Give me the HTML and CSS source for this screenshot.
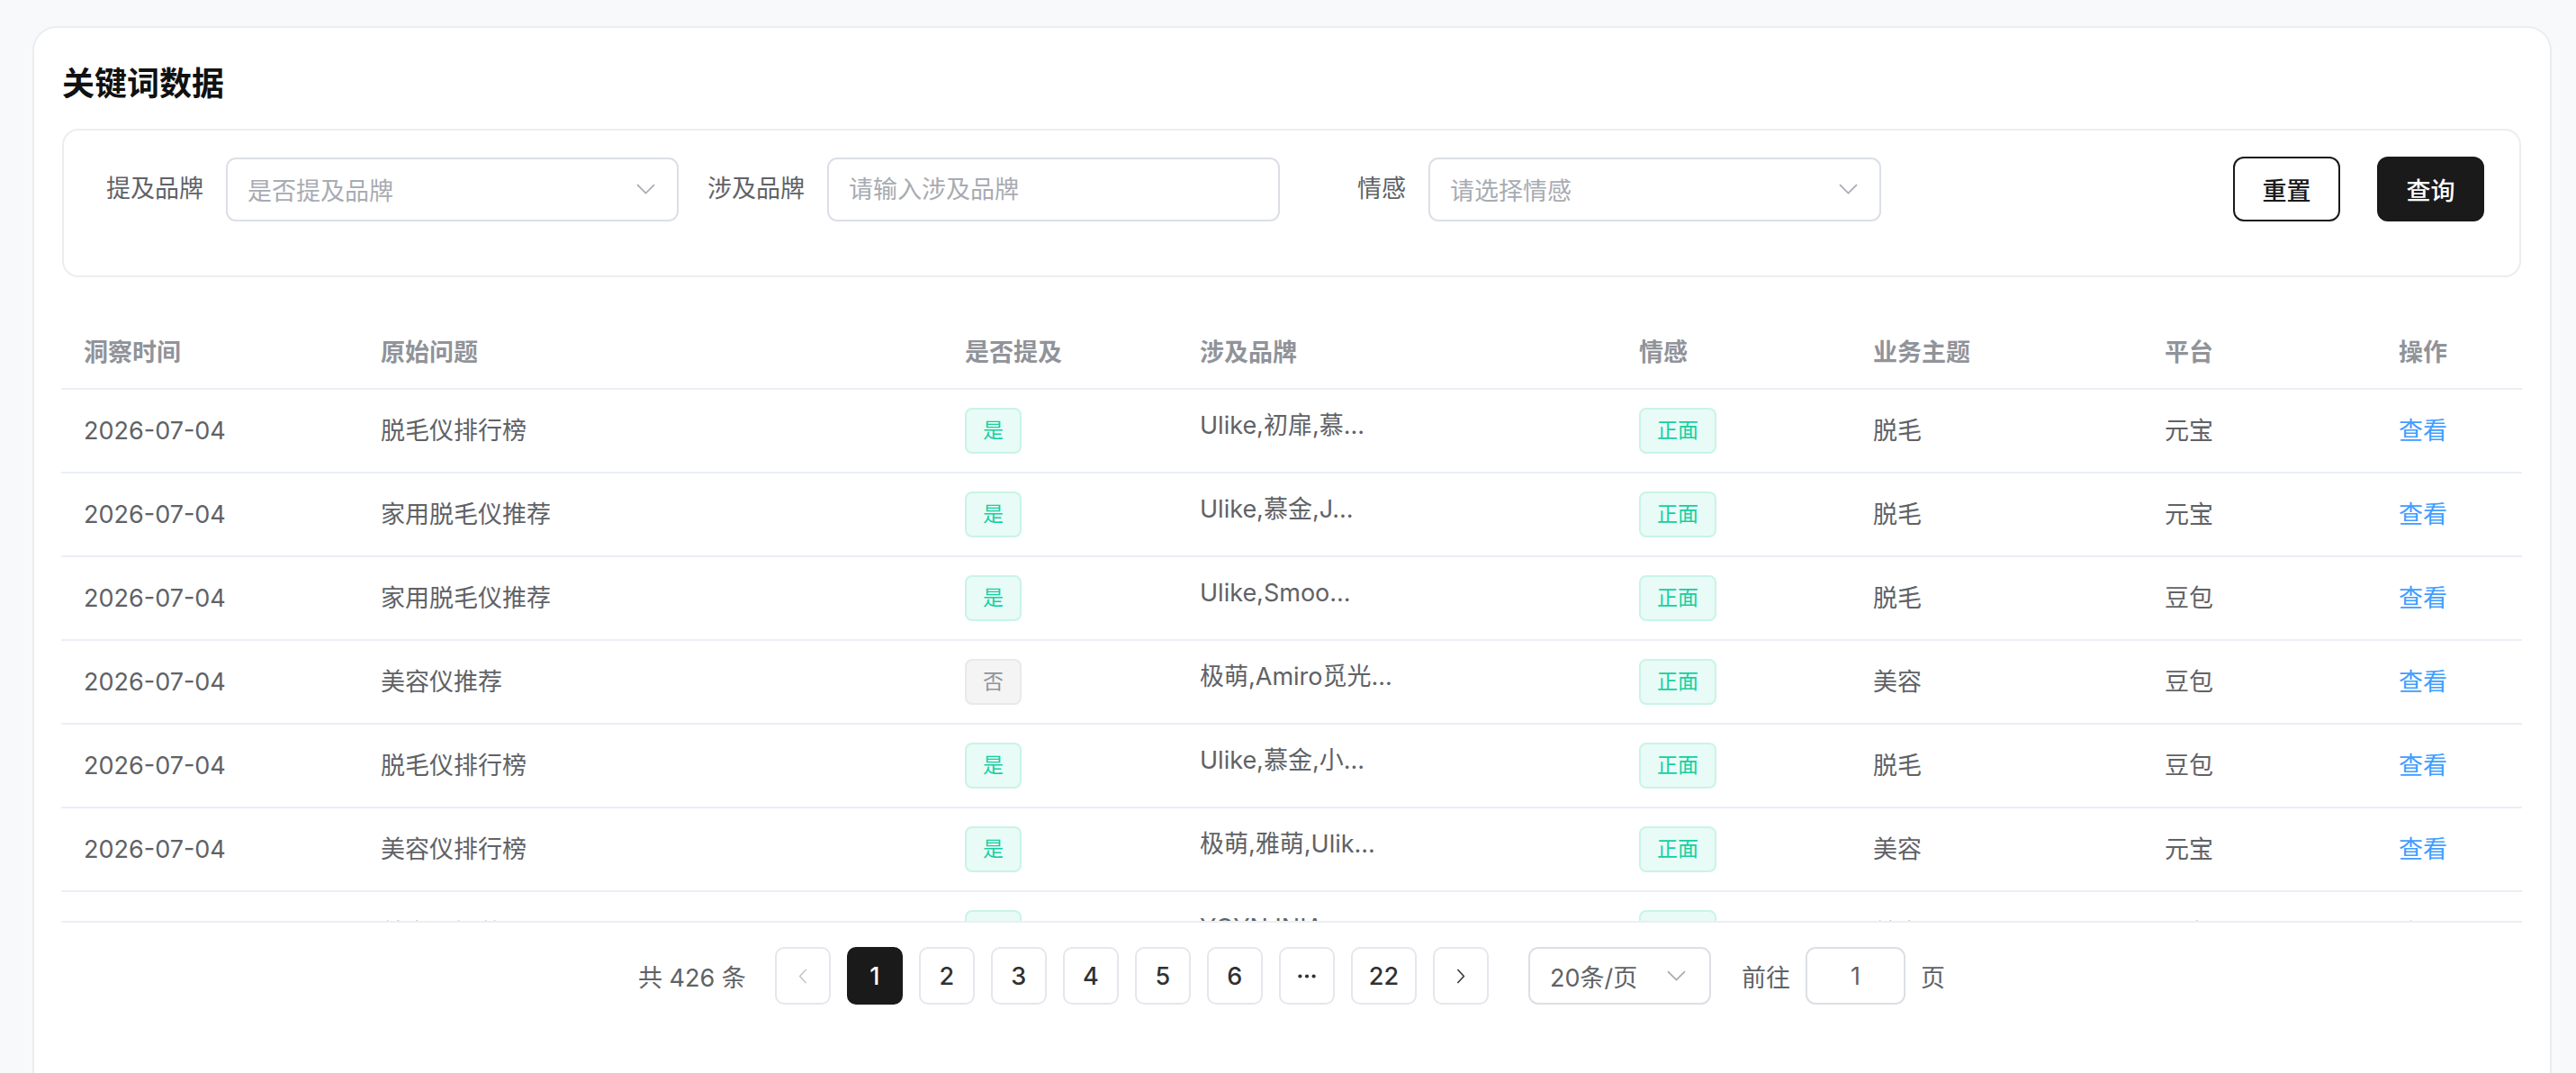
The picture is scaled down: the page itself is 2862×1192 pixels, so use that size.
FILE: index.html
```html
<!DOCTYPE html>
<html lang="zh-CN">
<head>
<meta charset="utf-8">
<title>关键词数据</title>
<link rel="stylesheet" href="styles.css">
</head>
<body>
<div class="page">
  <section class="card">
    <h1 class="title">关键词数据</h1>

    <form class="filter">
      <div class="field">
        <label class="field-label">提及品牌</label>
        <div class="control select">
          <span class="placeholder">是否提及品牌</span>
          <svg class="chev-down" width="21" height="12" viewBox="0 0 21 12"><path d="M1 1.2 L10.5 10.6 L20 1.2" fill="none" stroke="#a8abb2" stroke-width="1.7"/></svg>
        </div>
      </div>
      <div class="field">
        <label class="field-label">涉及品牌</label>
        <input class="control text-input" type="text" placeholder="请输入涉及品牌">
      </div>
      <div class="field">
        <label class="field-label">情感</label>
        <div class="control select">
          <span class="placeholder">请选择情感</span>
          <svg class="chev-down" width="21" height="12" viewBox="0 0 21 12"><path d="M1 1.2 L10.5 10.6 L20 1.2" fill="none" stroke="#a8abb2" stroke-width="1.7"/></svg>
        </div>
      </div>
      <div class="actions">
        <button type="button" class="btn">重置</button>
        <button type="button" class="btn btn-primary">查询</button>
      </div>
    </form>

    <div class="table">
      <div class="row head">
        <div class="cell">洞察时间</div>
        <div class="cell">原始问题</div>
        <div class="cell">是否提及</div>
        <div class="cell">涉及品牌</div>
        <div class="cell">情感</div>
        <div class="cell">业务主题</div>
        <div class="cell">平台</div>
        <div class="cell">操作</div>
      </div>
      <div class="body">
        <div class="row">
          <div class="cell">2026-07-04</div>
          <div class="cell">脱毛仪排行榜</div>
          <div class="cell"><span class="tag tag-yes">是</span></div>
          <div class="cell brand">Ulike,初扉,慕...</div>
          <div class="cell"><span class="tag tag-yes">正面</span></div>
          <div class="cell">脱毛</div>
          <div class="cell">元宝</div>
          <div class="cell"><a class="link" href="#">查看</a></div>
        </div>
        <div class="row">
          <div class="cell">2026-07-04</div>
          <div class="cell">家用脱毛仪推荐</div>
          <div class="cell"><span class="tag tag-yes">是</span></div>
          <div class="cell brand">Ulike,慕金,J...</div>
          <div class="cell"><span class="tag tag-yes">正面</span></div>
          <div class="cell">脱毛</div>
          <div class="cell">元宝</div>
          <div class="cell"><a class="link" href="#">查看</a></div>
        </div>
        <div class="row">
          <div class="cell">2026-07-04</div>
          <div class="cell">家用脱毛仪推荐</div>
          <div class="cell"><span class="tag tag-yes">是</span></div>
          <div class="cell brand">Ulike,Smoo...</div>
          <div class="cell"><span class="tag tag-yes">正面</span></div>
          <div class="cell">脱毛</div>
          <div class="cell">豆包</div>
          <div class="cell"><a class="link" href="#">查看</a></div>
        </div>
        <div class="row">
          <div class="cell">2026-07-04</div>
          <div class="cell">美容仪推荐</div>
          <div class="cell"><span class="tag tag-no">否</span></div>
          <div class="cell brand">极萌,Amiro觅光...</div>
          <div class="cell"><span class="tag tag-yes">正面</span></div>
          <div class="cell">美容</div>
          <div class="cell">豆包</div>
          <div class="cell"><a class="link" href="#">查看</a></div>
        </div>
        <div class="row">
          <div class="cell">2026-07-04</div>
          <div class="cell">脱毛仪排行榜</div>
          <div class="cell"><span class="tag tag-yes">是</span></div>
          <div class="cell brand">Ulike,慕金,小...</div>
          <div class="cell"><span class="tag tag-yes">正面</span></div>
          <div class="cell">脱毛</div>
          <div class="cell">豆包</div>
          <div class="cell"><a class="link" href="#">查看</a></div>
        </div>
        <div class="row">
          <div class="cell">2026-07-04</div>
          <div class="cell">美容仪排行榜</div>
          <div class="cell"><span class="tag tag-yes">是</span></div>
          <div class="cell brand">极萌,雅萌,Ulik...</div>
          <div class="cell"><span class="tag tag-yes">正面</span></div>
          <div class="cell">美容</div>
          <div class="cell">元宝</div>
          <div class="cell"><a class="link" href="#">查看</a></div>
        </div>
        <div class="row">
          <div class="cell">2026-07-04</div>
          <div class="cell">美容仪推荐</div>
          <div class="cell"><span class="tag tag-yes">是</span></div>
          <div class="cell brand">YOYN,INIA...</div>
          <div class="cell"><span class="tag tag-yes">正面</span></div>
          <div class="cell">美容</div>
          <div class="cell">豆包</div>
          <div class="cell"><a class="link" href="#">查看</a></div>
        </div>
      </div>
    </div>

    <nav class="pager">
      <span class="total">共 426 条</span>
      <button type="button" class="pg pg-nav" aria-label="上一页">
        <svg width="10" height="17" viewBox="0 0 10 17"><path d="M8.6 1 L1.6 8.5 L8.6 16" fill="none" stroke="#c0c4cc" stroke-width="1.5"/></svg>
      </button>
      <button type="button" class="pg pg-active">1</button>
      <button type="button" class="pg">2</button>
      <button type="button" class="pg">3</button>
      <button type="button" class="pg">4</button>
      <button type="button" class="pg">5</button>
      <button type="button" class="pg">6</button>
      <button type="button" class="pg pg-more" aria-label="更多">
        <svg width="20" height="5" viewBox="0 0 20 5"><circle cx="2.4" cy="2.5" r="2.1" fill="#303133"/><circle cx="10" cy="2.5" r="2.1" fill="#303133"/><circle cx="17.6" cy="2.5" r="2.1" fill="#303133"/></svg>
      </button>
      <button type="button" class="pg">22</button>
      <button type="button" class="pg pg-nav pg-last" aria-label="下一页">
        <svg width="10" height="17" viewBox="0 0 10 17"><path d="M1.4 1 L8.4 8.5 L1.4 16" fill="none" stroke="#303133" stroke-width="1.5"/></svg>
      </button>
      <div class="size-select">
        <span>20条/页</span>
        <svg width="21" height="12" viewBox="0 0 21 12"><path d="M1 1.2 L10.5 10.6 L20 1.2" fill="none" stroke="#a8abb2" stroke-width="1.7"/></svg>
      </div>
      <span class="jump-label">前往</span>
      <input class="jump-input" type="text" value="1">
      <span class="jump-unit">页</span>
    </nav>
  </section>
</div>
</body>
</html>
```

FILE: styles.css
```css
* {
  box-sizing: border-box;
}

html,
body {
  margin: 0;
  height: 100%;
}

body {
  background: #f8f9fb;
  font-family: Inter, "Noto Sans CJK SC", sans-serif;
  color: #606266;
  overflow: hidden;
}

.page {
  padding: 29px 27px 0 36px;
}

.card {
  background: #ffffff;
  border: 2px solid #ebedf0;
  border-radius: 27px;
  padding: 34px 32px 200px 31px;
  min-height: 1300px;
}

.title {
  margin: 0;
  font-family: "Noto Sans CJK SC", sans-serif;
  font-size: 36px;
  line-height: 50px;
  font-weight: 700;
  color: #111111;
}

/* filter bar */
.filter {
  margin: 28px 0 0;
  border: 2px solid #ebedf0;
  border-radius: 18px;
  padding: 29px 39px 60px 44px;
  display: flex;
  align-items: center;
}

.field {
  display: flex;
  align-items: center;
  margin-right: 29px;
}

.field-label {
  width: 136px;
  padding-right: 25px;
  text-align: right;
  font-size: 27px;
  line-height: 40px;
  color: #606266;
  white-space: nowrap;
}

.control {
  width: 503px;
  height: 71px;
  border: 2px solid #dcdfe6;
  border-radius: 11px;
  padding: 0 22px;
  background: #ffffff;
  font-family: Inter, "Noto Sans CJK SC", sans-serif;
  font-size: 27px;
  color: #606266;
}

.select {
  display: flex;
  align-items: center;
  justify-content: space-between;
}

.placeholder {
  color: #a8abb2;
}

.text-input {
  outline: none;
}

.text-input::placeholder {
  color: #a8abb2;
}

.chev-down {
  display: block;
  margin-right: 2px;
}

.actions {
  margin-left: auto;
  display: flex;
  gap: 41px;
}

.btn {
  width: 119px;
  height: 72px;
  border: 2px solid #1a1a1a;
  border-radius: 12px;
  background: #ffffff;
  color: #1a1a1a;
  font-family: "Noto Sans CJK SC", sans-serif;
  font-size: 27px;
  font-weight: 500;
  padding: 0;
}

.btn-primary {
  background: #1a1a1a;
  color: #ffffff;
}

/* table */
.table {
  margin: 45px -1px 0;
}

.row {
  display: grid;
  grid-template-columns: 330px 649px 261px 488px 260px 324px 260px 1fr;
  align-items: center;
  height: 93px;
  border-bottom: 2px solid #ebeef5;
}

.head {
  height: 80px;
  color: #909399;
  font-weight: 600;
}

.cell {
  padding-left: 25px;
  font-size: 27px;
  line-height: 40px;
  white-space: nowrap;
  overflow: hidden;
}

.body {
  height: 592px;
  overflow: hidden;
  border-bottom: 2px solid #ebeef5;
}

.brand {
  padding-bottom: 12px;
}

.tag {
  display: inline-flex;
  align-items: center;
  height: 51px;
  padding: 0 18px;
  border: 2px solid;
  border-radius: 8px;
  font-size: 23px;
  line-height: 1;
  vertical-align: middle;
}

.tag-yes {
  background: #e8fbf6;
  border-color: #c9f4e8;
  color: #15cfa2;
}

.tag-no {
  background: #f4f4f5;
  border-color: #e9e9eb;
  color: #909399;
}

.link {
  color: #409eff;
  text-decoration: none;
}

/* pagination */
.pager {
  margin-top: 27px;
  height: 64px;
  display: flex;
  justify-content: center;
  align-items: center;
  font-size: 27px;
}

.total {
  margin-right: 32px;
  color: #606266;
}

.pg {
  min-width: 62px;
  height: 64px;
  padding: 0 18px;
  margin-right: 18px;
  border: 2px solid #e4e7ed;
  border-radius: 10px;
  background: #ffffff;
  color: #303133;
  font-family: Inter, "Noto Sans CJK SC", sans-serif;
  font-size: 27px;
  font-weight: 500;
  display: flex;
  align-items: center;
  justify-content: center;
}

.pg-nav,
.pg-more {
  padding: 0;
}

.pg-last {
  margin-right: 0;
}

.pg-active {
  background: #1a1a1a;
  border-color: #1a1a1a;
  color: #ffffff;
}

.size-select {
  margin-left: 44px;
  width: 203px;
  height: 64px;
  border: 2px solid #dcdfe6;
  border-radius: 11px;
  padding: 0 26px 0 22px;
  display: flex;
  align-items: center;
  justify-content: space-between;
  color: #606266;
}

.jump-label {
  margin-left: 34px;
  color: #606266;
}

.jump-input {
  margin-left: 17px;
  width: 111px;
  height: 64px;
  border: 2px solid #dcdfe6;
  border-radius: 11px;
  text-align: center;
  font-family: Inter, "Noto Sans CJK SC", sans-serif;
  font-size: 27px;
  color: #606266;
  outline: none;
}

.jump-unit {
  margin-left: 17px;
  color: #606266;
}
```
